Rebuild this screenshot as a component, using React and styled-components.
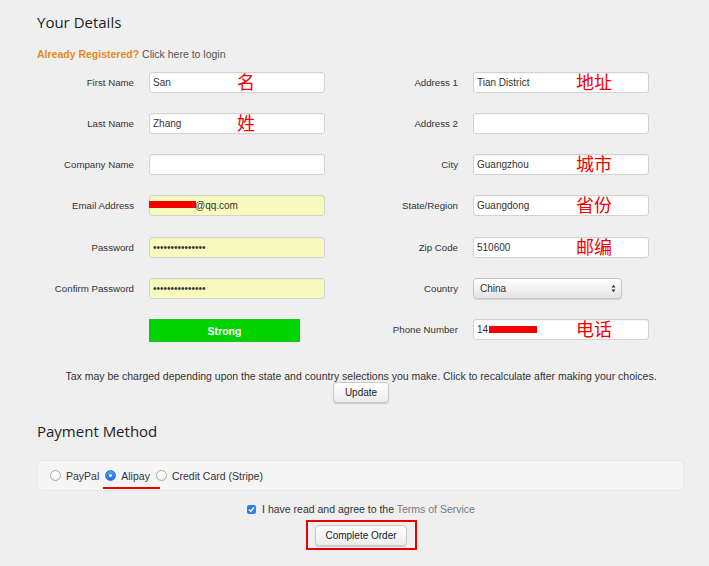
import React from "react";
import styled, { createGlobalStyle } from "styled-components";

const GlobalStyle = createGlobalStyle`
  html, body {
    margin: 0;
    padding: 0;
    background: #efefef;
  }
  body {
    font-family: "Liberation Sans", Arial, sans-serif;
    color: #333;
  }
`;

const Page = styled.div`
  width: 648px;
  padding: 10px 0 0 37px;
`;

const Heading = styled.h2`
  margin: 0;
  margin-top: ${(p) => p.$top || 0}px;
  font-family: "Open Sans", sans-serif;
  font-weight: 400;
  font-size: 15px;
  line-height: 24px;
  color: #1e1e1e;
`;

const LoginLine = styled.div`
  margin-top: 13px;
  font-size: 10.5px;
  line-height: 14px;
  color: #555;

  b {
    color: #e38b1c;
  }
`;

const FormGrid = styled.div`
  margin-top: 10.5px;
  display: grid;
  grid-template-columns: 324px 324px;
  row-gap: 20.3px;
`;

const Field = styled.div`
  display: grid;
  grid-template-columns: 97px 176px;
  column-gap: 15px;
  align-items: center;
  height: 21px;
`;

const Label = styled.label`
  text-align: right;
  font-size: 9.7px;
  color: #333;
`;

const InputBox = styled.div`
  position: relative;
  width: 176px;
  height: 21px;
`;

const TextInput = styled.input`
  box-sizing: border-box;
  width: 100%;
  height: 100%;
  margin: 0;
  padding: 0 3px 0 ${(p) => p.$indent || 3}px;
  border: 1px solid #d2d2d2;
  border-radius: 3px;
  background: ${(p) => (p.$filled ? "#f8fbbd" : "#fff")};
  box-shadow: inset 0 1px 1px rgba(0, 0, 0, 0.04);
  font-family: "Liberation Sans", Arial, sans-serif;
  font-size: 10px;
  color: #333;
  outline: none;
`;

const Note = styled.span`
  position: absolute;
  left: ${(p) => p.$left}px;
  top: -3px;
  font-family: "Noto Sans CJK SC", sans-serif;
  font-size: 18px;
  line-height: 24px;
  color: #f20000;
  pointer-events: none;
`;

const Redact = styled.span`
  position: absolute;
  left: ${(p) => p.$left}px;
  top: ${(p) => p.$top}px;
  width: ${(p) => p.$width}px;
  height: 7px;
  background: #f40000;
`;

const Select = styled.div`
  box-sizing: border-box;
  width: 149px;
  height: 21px;
  padding: 0 5px 0 6px;
  display: flex;
  align-items: center;
  justify-content: space-between;
  border: 1px solid #c6c6c6;
  border-radius: 4px;
  background: linear-gradient(#ffffff, #e4e4e4);
  box-shadow: 0 1px 1px rgba(0, 0, 0, 0.12);
  font-size: 10px;
  color: #333;
`;

const Strength = styled.div`
  box-sizing: border-box;
  width: 151px;
  height: 23px;
  display: flex;
  align-items: center;
  justify-content: center;
  background: #00d300;
  border: 1px solid #1fc01f;
  color: #fff;
  font-weight: 700;
  font-size: 10.5px;
`;

const TaxNote = styled.div`
  margin-top: 30px;
  text-align: center;
  font-size: 10.5px;
  line-height: 12px;
  color: #333;
`;

const Center = styled.div`
  display: flex;
  justify-content: center;
  margin-top: ${(p) => p.$top || 0}px;
`;

const Button = styled.button`
  box-sizing: border-box;
  height: 21px;
  padding: 0 ${(p) => p.$pad}px;
  border: 1px solid #c8c8c8;
  border-radius: 4px;
  background: linear-gradient(#ffffff, #ececec);
  box-shadow: 0 1px 1px rgba(0, 0, 0, 0.15);
  font-family: "Liberation Sans", Arial, sans-serif;
  font-size: 10px;
  color: #222;
`;

const PaymentBox = styled.div`
  box-sizing: border-box;
  margin-top: 17px;
  width: 647px;
  height: 31px;
  padding-left: 12px;
  display: flex;
  align-items: center;
  background: #f5f5f5;
  border: 1px solid #e7e7e7;
  border-radius: 4px;
  font-size: 10.5px;
  color: #333;
`;

const Option = styled.label`
  position: relative;
  display: flex;
  align-items: center;
  gap: 5px;
  margin-right: ${(p) => p.$gap || 6}px;
`;

const Radio = styled.span`
  box-sizing: border-box;
  width: 11px;
  height: 11px;
  border-radius: 50%;
  display: flex;
  align-items: center;
  justify-content: center;
  border: 1px solid ${(p) => (p.$on ? "#2a78e4" : "#a9a9a9")};
  background: ${(p) => (p.$on ? "linear-gradient(#4c9bf7, #1d6ee0)" : "linear-gradient(#fff, #f1f1f1)")};

  &::after {
    content: "";
    display: ${(p) => (p.$on ? "block" : "none")};
    width: 3px;
    height: 3px;
    border-radius: 50%;
    background: #fff;
  }
`;

const Underline = styled.span`
  position: absolute;
  left: -2px;
  bottom: -7px;
  width: 57px;
  height: 2px;
  background: #e60000;
`;

const AgreeLine = styled.div`
  margin-top: 11px;
  display: flex;
  justify-content: center;
  align-items: center;
  gap: 6px;
  font-size: 10.5px;
  line-height: 14px;
  color: #333;

  span.link {
    color: #7a7a7a;
  }
`;

const Check = styled.span`
  width: 9px;
  height: 9px;
  border-radius: 2px;
  background: #2f7fe8;
  display: flex;
  align-items: center;
  justify-content: center;
`;

const Highlight = styled.div`
  box-sizing: border-box;
  width: 111px;
  height: 30px;
  border: 2px solid #e80000;
  display: flex;
  align-items: center;
  justify-content: center;
  padding-top: 1px;
`;

function InputField({ label, value, filled, note, noteLeft, indent, redact }) {
  return (
    <Field>
      <Label>{label}</Label>
      <InputBox>
        <TextInput readOnly value={value || ""} $filled={filled} $indent={indent} />
        {redact && <Redact $left={redact.left} $top={redact.top} $width={redact.width} />}
        {note && <Note $left={noteLeft}>{note}</Note>}
      </InputBox>
    </Field>
  );
}

const dots = "\u2022".repeat(15);

export default function App() {
  return (
    <>
      <GlobalStyle />
      <Page>
        <Heading>Your Details</Heading>
        <LoginLine>
          <b>Already Registered?</b> Click here to login
        </LoginLine>

        <FormGrid>
          <InputField label="First Name" value="San" note="名" noteLeft={88} />
          <InputField label="Address 1" value="Tian District" note="地址" noteLeft={103} />

          <InputField label="Last Name" value="Zhang" note="姓" noteLeft={88} />
          <InputField label="Address 2" />

          <InputField label="Company Name" />
          <InputField label="City" value="Guangzhou" note="城市" noteLeft={103} />

          <InputField
            label="Email Address"
            value="@qq.com"
            filled
            indent={45}
            redact={{ left: 0, top: 6, width: 47 }}
          />
          <InputField label="State/Region" value="Guangdong" note="省份" noteLeft={103} />

          <InputField label="Password" value={dots} filled />
          <InputField label="Zip Code" value="510600" note="邮编" noteLeft={103} />

          <InputField label="Confirm Password" value={dots} filled />
          <Field>
            <Label>Country</Label>
            <Select>
              <span>China</span>
              <svg width="5" height="9" viewBox="0 0 5 9">
                <path d="M0.5 3.5 L2.5 0.8 L4.5 3.5 Z M0.5 5.5 L2.5 8.2 L4.5 5.5 Z" fill="#333" />
              </svg>
            </Select>
          </Field>

          <Field>
            <span />
            <Strength>Strong</Strength>
          </Field>
          <InputField
            label="Phone Number"
            value="14"
            note="电话"
            noteLeft={103}
            redact={{ left: 16, top: 7, width: 48 }}
          />
        </FormGrid>

        <TaxNote>
          Tax may be charged depending upon the state and country selections you make. Click to recalculate after making your choices.
        </TaxNote>
        <Center>
          <Button $pad={11}>Update</Button>
        </Center>

        <Heading $top={16}>Payment Method</Heading>
        <PaymentBox>
          <Option>
            <Radio />
            PayPal
          </Option>
          <Option>
            <Radio $on />
            Alipay
            <Underline />
          </Option>
          <Option>
            <Radio />
            Credit Card (Stripe)
          </Option>
        </PaymentBox>

        <AgreeLine>
          <Check>
            <svg width="7" height="7" viewBox="0 0 7 7">
              <path d="M1 3.6 L2.8 5.4 L6 1.4" stroke="#fff" strokeWidth="1.4" fill="none" />
            </svg>
          </Check>
          <span>
            I have read and agree to the <span className="link">Terms of Service</span>
          </span>
        </AgreeLine>
        <Center $top={4}>
          <Highlight>
            <Button $pad={9}>Complete Order</Button>
          </Highlight>
        </Center>
      </Page>
    </>
  );
}
